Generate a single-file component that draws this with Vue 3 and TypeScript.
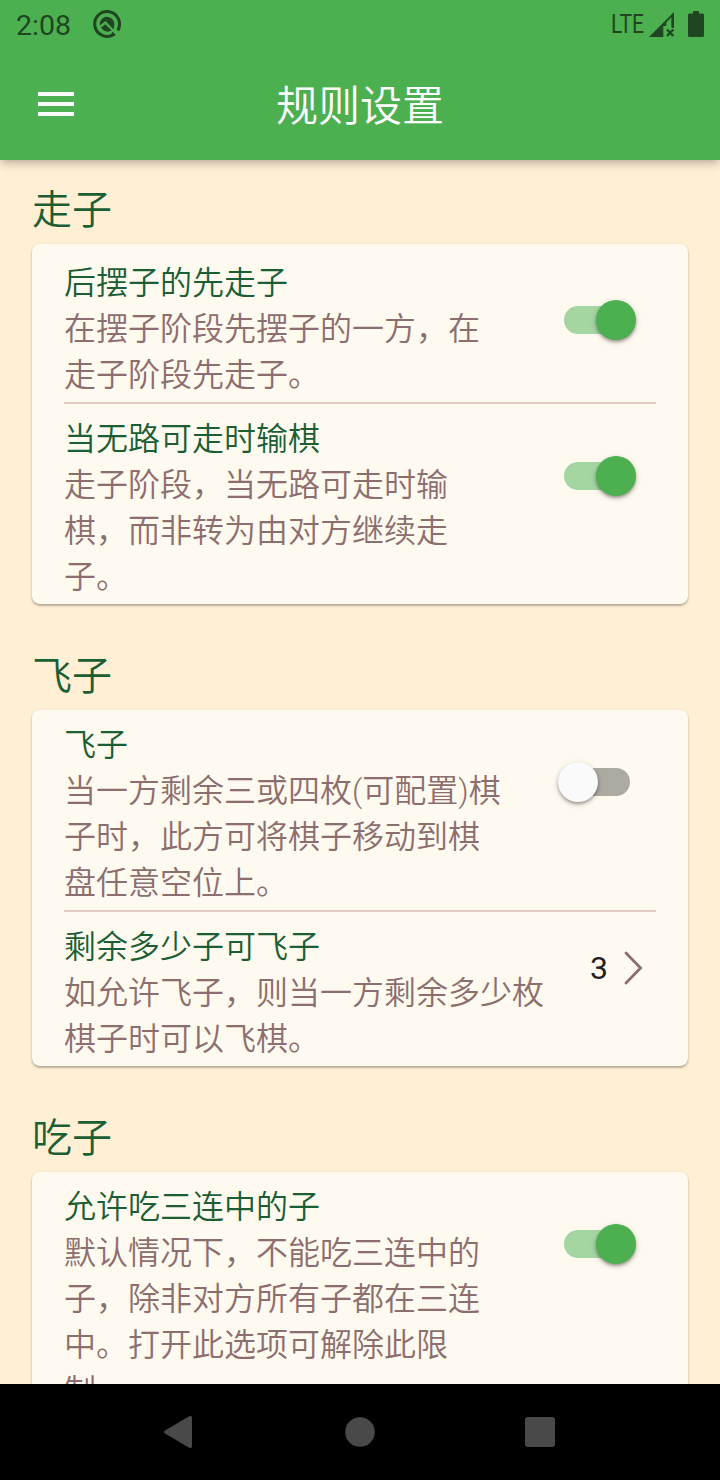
<script setup lang="ts">
interface Row {
  title: string
  desc: string
  on?: boolean
  value?: string
}
interface Section {
  name: string
  roomy?: boolean
  rows: Row[]
}

const sections: Section[] = [
  {
    name: '走子',
    roomy: true,
    rows: [
      { title: '后摆子的先走子', desc: '在摆子阶段先摆子的一方，在走子阶段先走子。', on: true },
      { title: '当无路可走时输棋', desc: '走子阶段，当无路可走时输棋，而非转为由对方继续走子。', on: true },
    ],
  },
  {
    name: '飞子',
    rows: [
      { title: '飞子', desc: '当一方剩余三或四枚(可配置)棋子时，此方可将棋子移动到棋盘任意空位上。', on: false },
      { title: '剩余多少子可飞子', desc: '如允许飞子，则当一方剩余多少枚棋子时可以飞棋。', value: '3' },
    ],
  },
  {
    name: '吃子',
    rows: [
      { title: '允许吃三连中的子', desc: '默认情况下，不能吃三连中的子，除非对方所有子都在三连中。打开此选项可解除此限制。', on: true },
    ],
  },
]
</script>

<template>
  <div class="screen">
    <header class="top">
      <div class="status">
        <span class="clock">2:08</span>
        <svg class="notice" width="28" height="28" viewBox="0 0 28 28">
          <path d="M20.8 24.4A12.4 12.4 0 1 1 24.7 20.4" fill="none" stroke="#1f4621" stroke-width="3" />
          <path d="M6.8 12.6A7.4 7.4 0 0 1 21.4 14.6Q21.4 17.4 20.2 19.2L12.6 11L6.8 15.4Z" fill="#1f4621" />
          <path d="M8 17.6L12.4 14.2L18.6 20.6A7.6 7.6 0 0 1 8 17.6Z" fill="#1f4621" />
          <path d="M19 22.5L22 25.5" stroke="#1f4621" stroke-width="2" />
        </svg>
        <svg class="network" width="34" height="28" viewBox="0 0 34 28">
          <text x="0" y="23" textLength="33" lengthAdjust="spacingAndGlyphs">LTE</text>
        </svg>
        <svg class="signal" width="26" height="26" viewBox="0 0 26 26">
          <path d="M0 25L25 0V25Z" fill="#1f4621" />
          <path d="M14.3 14H17.3V10.5L22.6 5V16H25V25H14.3Z" fill="#4caf50" />
          <path d="M25 0V15H22.6V4Z" fill="#1f4621" />
          <path d="M18 17.5L24.4 24M24.4 17.5L18 24" stroke="#1f4621" stroke-width="2.4" />
        </svg>
        <svg class="battery" width="16" height="26" viewBox="0 0 16 26">
          <path d="M5 0H11V2.5H14.5Q16 2.5 16 4V24.5Q16 26 14.5 26H1.5Q0 26 0 24.5V4Q0 2.5 1.5 2.5H5Z" fill="#1f4621" />
        </svg>
      </div>
      <div class="bar">
        <button class="menu" aria-label="菜单"><i></i><i></i><i></i></button>
        <h1>规则设置</h1>
      </div>
    </header>

    <main>
      <section v-for="s in sections" :key="s.name">
        <h2>{{ s.name }}</h2>
        <div class="card" :class="{ roomy: s.roomy }">
          <div v-for="r in s.rows" :key="r.title" class="row">
            <div class="copy" :class="{ wide: r.value }">
              <h3>{{ r.title }}</h3>
              <p>{{ r.desc }}</p>
            </div>
            <div v-if="r.value" class="value">
              <span>{{ r.value }}</span>
              <svg width="20" height="34" viewBox="0 0 20 34">
                <path d="M2 2L16.6 17L2 32" fill="none" stroke="#8d6e6e" stroke-width="2.8" stroke-linecap="round" />
              </svg>
            </div>
            <div v-else class="switch" :class="{ on: r.on }"><i></i></div>
          </div>
        </div>
      </section>
    </main>

    <nav>
      <svg width="720" height="96" viewBox="0 0 720 96" fill="#494949">
        <path d="M165 46.5L189.2 32.3Q192 31 192 34V62Q192 65 189.2 63.7L165 49.5Q163 48 165 46.5Z" />
        <circle cx="360" cy="48" r="14.8" />
        <rect x="525" y="33" width="30" height="30" rx="3" />
      </svg>
    </nav>
  </div>
</template>

<style>
body { margin: 0; }
</style>

<style scoped>
* { box-sizing: border-box; }
h1, h2, h3, p { margin: 0; font-weight: 350; }
.screen {
  display: flex;
  flex-direction: column;
  width: 720px;
  height: 1480px;
  overflow: hidden;
  background: #ffefd5;
  font-family: Roboto, "Noto Sans CJK SC", sans-serif;
  text-spacing-trim: space-all;
}
.top {
  flex: none;
  height: 160px;
  z-index: 1;
  background: #4caf50;
  box-shadow: 0 4px 8px -2px rgba(0, 0, 0, .18), 0 8px 10px rgba(0, 0, 0, .04), 0 2px 10px rgba(0, 0, 0, .1);
}
.status { display: flex; align-items: flex-start; height: 48px; padding: 0 16px; }
.clock { width: 77px; padding-top: 9px; font-size: 28.5px; line-height: 33px; color: #1f4621; }
.notice { margin-top: 10px; }
.network { margin: 10px 4px 0 auto; overflow: visible; }
.network text { font: 25px Roboto, sans-serif; fill: #1f4621; }
.signal { margin-top: 12px; margin-right: 13px; }
.battery { margin-top: 11px; }
.bar { display: grid; grid-template-columns: 112px 1fr 112px; height: 112px; }
.menu {
  display: flex;
  flex-direction: column;
  gap: 6px;
  margin: 44px 0 0 38px;
  padding: 0;
  width: 36px;
  height: 24px;
  border: 0;
  background: none;
}
.menu i { width: 36px; height: 4px; background: #fff; }
h1 { padding-top: 29px; font-size: 42px; line-height: 60px; text-align: center; color: #fff; }
main { flex: 1; min-height: 0; overflow: hidden; padding: 17px 32px 0; }
section { margin-bottom: 39px; }
h2 { padding-top: 5px; margin-bottom: 4px; font-size: 40px; line-height: 58px; color: #1b5e34; }
.card {
  border-radius: 8px;
  background: #fffaf0;
  box-shadow: 0 2px 2px rgba(0, 0, 0, .2), 0 1px 3px rgba(0, 0, 0, .15);
}
.roomy { padding-top: 4px; }
.row { position: relative; display: flex; justify-content: space-between; padding: 8px 32px; }
.row + .row::before {
  content: "";
  position: absolute;
  top: -2px;
  left: 32px;
  right: 32px;
  height: 2px;
  background: #e5c9c5;
}
.row + .row { margin-top: 2px; }
.copy { width: 442px; padding-top: 4px; margin-bottom: -4px; font-size: 32px; line-height: 46px; color: #8d6e6e; }
.copy.wide { width: 490px; }
h3 { font-size: 32px; color: #1b5e34; }
.switch { flex: none; width: 66px; height: 28px; margin: 50px 26px 0 0; border-radius: 14px; background: #adaaa2; }
.switch i {
  display: block;
  width: 40px;
  height: 40px;
  margin: -6px 0 0 -6px;
  border-radius: 50%;
  background: #fafafa;
  box-shadow: 0 2px 3px rgba(0, 0, 0, .28), 0 2px 6px rgba(0, 0, 0, .18);
}
.switch.on { background: #a5d6a2; }
.switch.on i { margin-left: 32px; background: #4caf50; }
.value { display: flex; align-items: flex-start; padding: 31px 12px 0 0; gap: 16px; font-size: 32px; line-height: 34px; color: #212121; }
nav { flex: none; height: 96px; background: #000; }
nav svg { display: block; }
</style>
